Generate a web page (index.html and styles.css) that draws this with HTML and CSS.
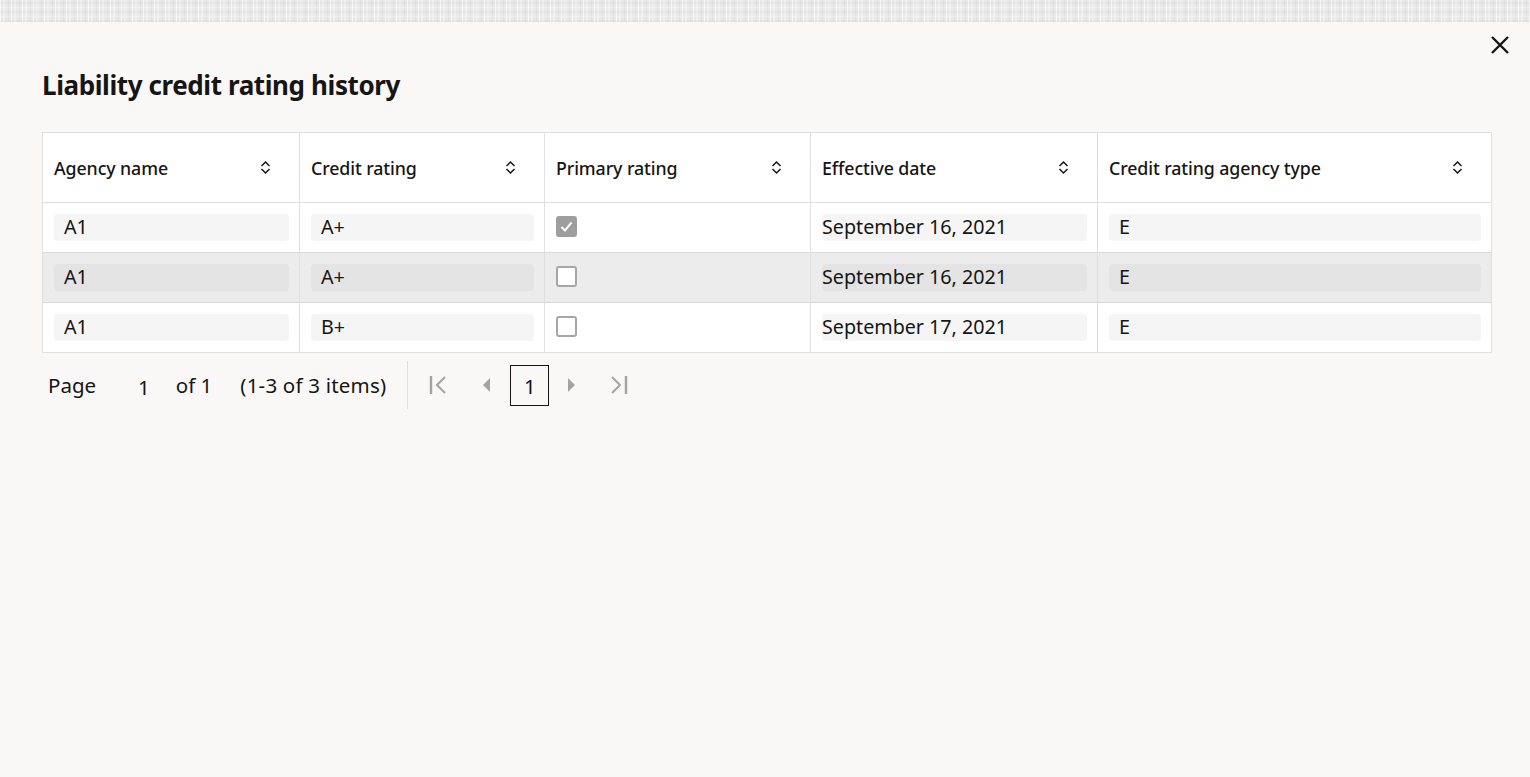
FILE: index.html
```html
<!DOCTYPE html>
<html lang="en">
<head>
<meta charset="utf-8">
<title>Liability credit rating history</title>
<link rel="stylesheet" href="styles.css">
</head>
<body>

<!-- textured strip of the page behind the dialog -->
<div class="backdrop"></div>

<section class="dialog">
  <button class="close" aria-label="Close">
    <svg viewBox="0 0 20 20" width="20" height="20"><path d="M2 2L18 18M18 2L2 18" stroke="#161513" stroke-width="2.4" fill="none"/></svg>
  </button>

  <h1>Liability credit rating history</h1>

  <table class="grid">
    <colgroup>
      <col style="width:257px"><col style="width:245px"><col style="width:266px"><col style="width:287px"><col>
    </colgroup>
    <thead>
      <tr>
        <th><div class="hd"><span>Agency name</span><i class="sort"></i></div></th>
        <th><div class="hd"><span>Credit rating</span><i class="sort"></i></div></th>
        <th><div class="hd"><span>Primary rating</span><i class="sort"></i></div></th>
        <th><div class="hd"><span>Effective date</span><i class="sort"></i></div></th>
        <th><div class="hd"><span>Credit rating agency type</span><i class="sort"></i></div></th>
      </tr>
    </thead>
    <tbody>
      <tr>
        <td><div class="val">A1</div></td>
        <td><div class="val">A+</div></td>
        <td><span class="chk on"></span></td>
        <td><div class="val date">September 16, 2021</div></td>
        <td><div class="val">E</div></td>
      </tr>
      <tr class="hl">
        <td><div class="val">A1</div></td>
        <td><div class="val">A+</div></td>
        <td><span class="chk"></span></td>
        <td><div class="val date">September 16, 2021</div></td>
        <td><div class="val">E</div></td>
      </tr>
      <tr>
        <td><div class="val">A1</div></td>
        <td><div class="val">B+</div></td>
        <td><span class="chk"></span></td>
        <td><div class="val date">September 17, 2021</div></td>
        <td><div class="val">E</div></td>
      </tr>
    </tbody>
  </table>

  <!-- pager -->
  <div class="pager">
    <span class="lbl">Page</span>
    <span class="cur">1</span>
    <span class="of">of 1</span>
    <span class="items">(1-3 of 3 items)</span>
    <span class="sep"></span>
    <span class="nav first"><svg viewBox="0 0 18 20" width="18" height="20"><path d="M2 1V19" stroke="#a3a3a3" stroke-width="2.4"/><path d="M16 2L8 10L16 18" stroke="#a3a3a3" stroke-width="2" fill="none"/></svg></span>
    <span class="nav prev"><svg viewBox="0 0 10 16" width="10" height="16"><path d="M9 1V15L2 8Z" fill="#a3a3a3"/></svg></span>
    <span class="pg">1</span>
    <span class="nav next"><svg viewBox="0 0 10 16" width="10" height="16"><path d="M1 1V15L8 8Z" fill="#a3a3a3"/></svg></span>
    <span class="nav last"><svg viewBox="0 0 18 20" width="18" height="20"><path d="M2 2L10 10L2 18" stroke="#a3a3a3" stroke-width="2" fill="none"/><path d="M16 1V19" stroke="#a3a3a3" stroke-width="2.4"/></svg></span>
  </div>
</section>

</body>
</html>
```

FILE: styles.css
```css
:root{
  --bg:#f9f8f6;
  --ink:#161513;
  --line:#e0e0e0;
  --field:#f5f5f5;
  --field-hl:#e4e4e4;
  --row-hl:#ececec;
  --muted:#a3a3a3;
}
*{box-sizing:border-box;margin:0;padding:0}
html,body{height:100%}
body{background:var(--bg);color:var(--ink);font-family:"Noto Sans","Open Sans",sans-serif;overflow:hidden}

/* ---------- BACKDROP STRIP ---------- */
.backdrop{
  height:22px;
  background:
    repeating-linear-gradient(90deg,rgba(255,255,255,.6) 0 1px,transparent 1px 3px,rgba(255,255,255,.3) 3px 5px,transparent 5px 8px,rgba(0,0,0,.03) 8px 9px,transparent 9px 11px),
    repeating-linear-gradient(0deg,rgba(0,0,0,.03) 0 2px,transparent 2px 5px,rgba(255,255,255,.25) 5px 6px,transparent 6px 9px),
    #e9e9e9;
}

/* ---------- DIALOG ---------- */
.dialog{position:relative;padding:0 38px 0 42px}
.close{
  position:absolute;top:13px;right:20px;width:20px;height:20px;
  background:none;border:0;cursor:pointer;display:flex
}
h1{font-size:26px;font-weight:700;line-height:34px;padding:46px 0 30px;letter-spacing:-.4px}

/* ---------- TABLE ---------- */
table.grid{
  width:1450px;border-collapse:collapse;table-layout:fixed;
  background:#fff;border:1px solid var(--line);
}
.grid th,.grid td{border-left:1px solid var(--line);text-align:left;vertical-align:middle}
.grid th{height:70px;padding:0 0 0 11px;border-bottom:1px solid var(--line);font-weight:500}
.grid td{height:50px;padding:0 10px 0 11px;border-top:1px solid #d9d9d9}
.grid tbody tr:first-child td{border-top:0}
.grid tr.hl td{background:var(--row-hl)}

.hd{display:flex;align-items:center;justify-content:space-between;padding-right:28px;font-size:17.8px;font-weight:500;letter-spacing:-.1px}
.sort{
  width:11px;height:15px;display:block;flex:none;
  background:url("data:image/svg+xml,%3Csvg xmlns='http://www.w3.org/2000/svg' viewBox='0 0 11 15'%3E%3Cpath d='M1.5 6L5.5 2L9.5 6M1.5 9L5.5 13L9.5 9' stroke='%23161513' stroke-width='1.5' fill='none'/%3E%3C/svg%3E") no-repeat center/contain
}

.val{
  background:var(--field);border-radius:4px;height:27px;
  padding:0 10px;font-size:19.7px;line-height:26px;
  white-space:nowrap;overflow:hidden
}
.val.date{padding-left:0}
.hl .val{background:var(--field-hl)}

.chk{
  display:block;width:21px;height:21px;margin-top:-2px;
  border:2px solid #a6a6a6;border-radius:3px;background:#fff
}
.chk.on{
  background:#9e9e9e url("data:image/svg+xml,%3Csvg xmlns='http://www.w3.org/2000/svg' viewBox='0 0 17 17'%3E%3Cpath d='M3.5 9L7 12.5L13.5 4.5' stroke='%23fff' stroke-width='2' fill='none'/%3E%3C/svg%3E") no-repeat center/contain;
  border-color:#9e9e9e
}

/* ---------- PAGER ---------- */
.pager{display:flex;align-items:center;height:56px;margin-top:4px;font-size:20.5px;padding-left:6px}
.pager .cur{margin-left:42px;position:relative;top:2px}
.pager .of{margin-left:26px}
.pager .items{margin-left:28px;letter-spacing:.2px}
.pager .sep{width:1px;height:48px;background:#dedede;margin-left:21px}
.pager .nav{display:flex;align-items:center}
.pager .first{margin-left:21px}
.pager .prev{margin-left:34px}
.pager .pg{
  width:39px;height:41px;border:1px solid var(--ink);margin-left:19px;
  display:flex;align-items:center;justify-content:center;padding-top:2px
}
.pager .next{margin-left:18px}
.pager .last{margin-left:33px}
```
